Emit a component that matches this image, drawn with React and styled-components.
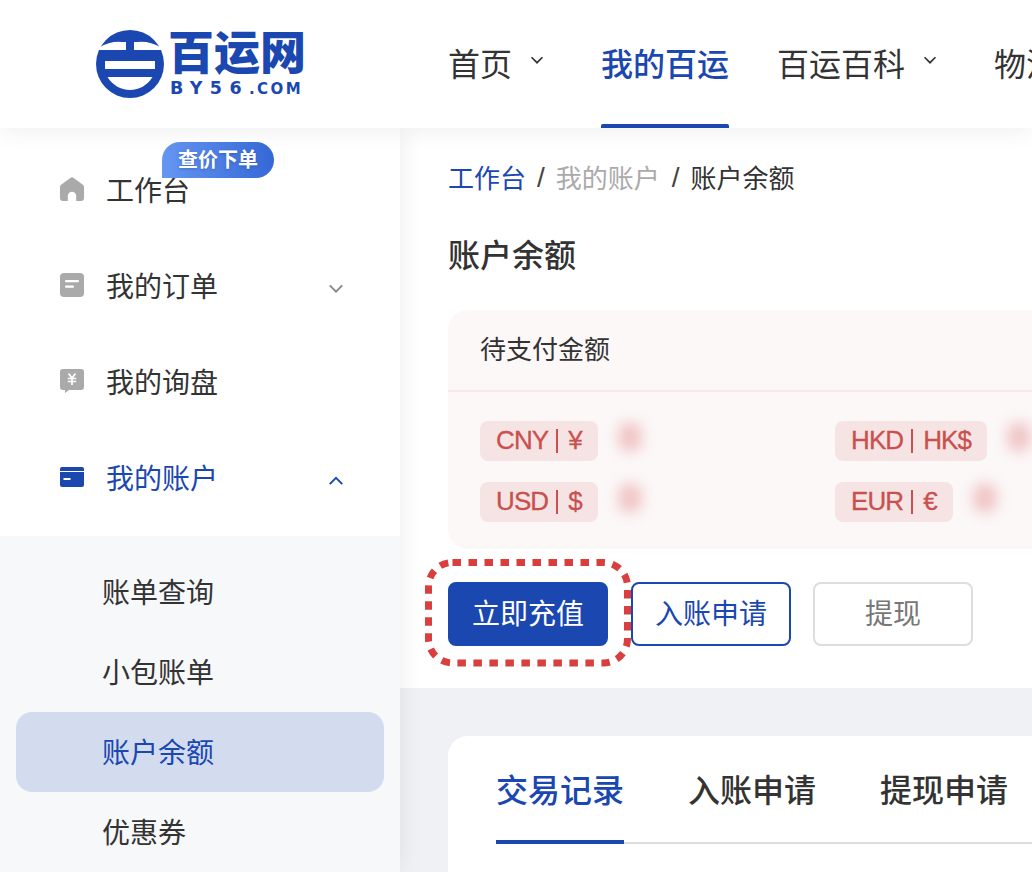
import React from 'react';
import styled, { createGlobalStyle } from 'styled-components';

const blue = '#1a47b0';

const GlobalStyle = createGlobalStyle`
  html, body {
    margin: 0;
    padding: 0;
    background: #fff;
  }
  body {
    font-family: "Liberation Sans", "Noto Sans CJK SC", sans-serif;
    color: #333;
  }
`;

const Page = styled.div`
  width: 1032px;
  height: 872px;
  overflow: hidden;
  display: flex;
  flex-direction: column;
`;

const Header = styled.header`
  position: relative;
  z-index: 2;
  flex: none;
  height: 128px;
  display: flex;
  background: #fff;
  box-shadow: 0 2px 24px rgba(0, 0, 0, 0.07);
`;

const LogoBox = styled.div`
  flex: none;
  width: 448px;
  padding: 30px 0 0 96px;
  box-sizing: border-box;
  display: flex;
  gap: 4px;
  color: ${blue};
`;

const LogoWords = styled.div`
  display: flex;
  flex-direction: column;
  white-space: nowrap;
`;

const LogoCn = styled.div`
  height: 48px;
  font-size: 46px;
  line-height: 47px;
  font-weight: 900;
`;

const LogoEn = styled.div`
  height: 20px;
  margin-left: 2px;
  font-family: "DejaVu Sans", sans-serif;
  font-size: 17.500px;
  line-height: 20px;
  font-weight: 700;
  letter-spacing: 7.400px;
`;

const LogoEnSmall = styled.span`
  font-size: 15px;
  letter-spacing: 2.400px;
`;

const Nav = styled.nav`
  display: flex;
  white-space: nowrap;
`;

const NavItem = styled.div`
  position: relative;
  height: 128px;
  padding-bottom: 4px;
  box-sizing: border-box;
  margin-right: 48px;
  display: flex;
  align-items: center;
  font-size: 32px;
  font-weight: ${p => (p.$active ? 500 : 400)};
  color: ${p => (p.$active ? blue : '#333')};
  ${p => p.$active && `
    &::after {
      content: "";
      position: absolute;
      left: 0;
      right: 0;
      bottom: 0;
      height: 4px;
      border-radius: 2px 2px 0 0;
      background: ${blue};
    }
  `}
`;

const NavCaret = styled.span`
  display: flex;
  width: 41px;
  height: 20px;
  padding-left: 18px;
  box-sizing: border-box;
  margin-bottom: 4px;
  align-items: center;
`;

const Body = styled.div`
  flex: 1;
  min-height: 0;
  display: flex;
`;

const Sidebar = styled.aside`
  position: relative;
  z-index: 1;
  flex: none;
  width: 400px;
  padding-top: 15px;
  box-sizing: border-box;
  background: #fff;
  box-shadow: 0 0 24px rgba(0, 0, 0, 0.08);
`;

const MenuRow = styled.div`
  position: relative;
  height: 96px;
  padding: 0 56px 0 60px;
  box-sizing: border-box;
  display: flex;
  align-items: center;
  gap: 22px;
  font-size: 28px;
  line-height: 36px;
  color: ${p => (p.$active ? blue : '#333')};
`;

const MenuIcon = styled.span`
  display: flex;
  margin-bottom: 4px;
`;

const MenuLabel = styled.span`
  margin-top: 2px;
`;

const MenuArrow = styled.span`
  display: flex;
  margin: 3px 0 0 auto;
`;

const Badge = styled.div`
  position: absolute;
  left: 162px;
  top: -1px;
  width: 112px;
  height: 36px;
  border-radius: 18px 18px 18px 0;
  background: linear-gradient(90deg, #6696f2, #3568d6);
  color: #fff;
  font-size: 20px;
  font-weight: 700;
  line-height: 37px;
  text-align: center;
  text-shadow: 0 1px 3px rgba(20, 50, 120, 0.35);
`;

const SubMenu = styled.div`
  margin-top: 9px;
  padding-top: 16px;
  height: 400px;
  background: #f7f8fa;
`;

const SubItem = styled.div`
  height: 80px;
  margin: 0 16px;
  padding: 0 0 2px 86px;
  box-sizing: border-box;
  display: flex;
  align-items: center;
  border-radius: 16px;
  font-size: 28px;
  color: ${p => (p.$active ? blue : '#333')};
  background: ${p => (p.$active ? '#d3dcef' : 'transparent')};
`;

const Main = styled.main`
  flex: 1;
  min-width: 0;
  background: #f0f1f5;
`;

const TopPanel = styled.section`
  width: 632px;
  padding: 32px 0 42px 48px;
  box-sizing: border-box;
  background: #fff;
`;

const Crumbs = styled.div`
  height: 36px;
  padding-bottom: 4px;
  box-sizing: border-box;
  display: flex;
  align-items: center;
  font-size: 26px;
  white-space: nowrap;
`;

const Crumb = styled.span`
  color: ${p => p.$color || '#333'};
`;

const CrumbSep = styled.span`
  margin: 4px ${p => p.$right}px 0 ${p => p.$left}px;
  font-size: 28px;
  color: #444;
`;

const Title = styled.h1`
  height: 44px;
  margin: 38px 0 32px;
  font-size: 32px;
  line-height: 44px;
  font-weight: 500;
  color: #333;
`;

const PayCard = styled.div`
  width: 900px;
  height: 239px;
  border-radius: 20px 0 0 20px;
  background: #fcf8f8;
`;

const PayHead = styled.div`
  height: 74px;
  padding: 0 0 6px 32px;
  display: flex;
  align-items: center;
  font-size: 26px;
  border-bottom: 2px solid #f8e9e9;
`;

const CurrencyGrid = styled.div`
  padding: 29px 0 0 32px;
  display: grid;
  grid-template-columns: 355px 355px;
  row-gap: 21px;
`;

const Currency = styled.div`
  display: flex;
  align-items: center;
`;

const Tag = styled.span`
  height: 40px;
  padding: 0 16px 2px;
  box-sizing: border-box;
  display: flex;
  align-items: center;
  border-radius: 8px;
  background: #f6e4e4;
  color: #c9504e;
  font-size: 26px;
  letter-spacing: -0.9px;
  white-space: nowrap;
  -webkit-text-stroke: 0.3px #c9504e;
`;

const TagBar = styled.i`
  width: 2px;
  height: 24px;
  margin: 2px 10px 0 8px;
  background: #c9504e;
`;

const Blurred = styled.span`
  width: 24px;
  height: 30px;
  margin-left: 20px;
  margin-bottom: 8px;
  border-radius: 12px;
  background: #f0c4c4;
  filter: blur(7px);
`;

const Actions = styled.div`
  margin-top: 33px;
  display: flex;
`;

const Button = styled.button`
  position: relative;
  flex: none;
  width: 160px;
  height: 64px;
  margin-left: ${p => p.$gap || 0}px;
  padding: 0 0 4px;
  box-sizing: border-box;
  border-radius: 8px;
  border: 2px solid ${p => (p.$kind === 'ghost' ? '#ddd' : blue)};
  background: ${p => (p.$kind === 'primary' ? blue : '#fff')};
  color: ${p => (p.$kind === 'primary' ? '#fff' : p.$kind === 'ghost' ? '#777' : blue)};
  font: inherit;
  font-size: 28px;
`;

const Dotted = styled.svg`
  position: absolute;
  left: -30px;
  top: -30px;
  pointer-events: none;
`;

const Records = styled.section`
  width: 900px;
  height: 300px;
  margin: 48px 0 0 48px;
  border-radius: 20px 0 0 0;
  background: #fff;
`;

const Tabs = styled.div`
  height: 108px;
  margin-left: 48px;
  display: flex;
  gap: 64px;
  box-sizing: border-box;
  border-bottom: 2px solid #ddd;
`;

const Tab = styled.div`
  position: relative;
  height: 106px;
  line-height: 110px;
  font-size: 32px;
  font-weight: 500;
  color: ${p => (p.$active ? blue : '#333')};
  ${p => p.$active && `
    &::after {
      content: "";
      position: absolute;
      left: 0;
      right: 0;
      bottom: -2px;
      height: 4px;
      background: ${blue};
    }
  `}
`;

const Chevron = ({ up, size = 16, color = '#888' }) => (
  <svg width={size} height={size * 0.6} viewBox="0 0 16 10" fill="none">
    <path d={up ? 'M1.500 8.500 8 2l6.500 6.500' : 'M1.500 1.500 8 8l6.500-6.500'} stroke={color} strokeWidth="2" />
  </svg>
);

const LogoMark = () => (
  <svg width="68" height="68" viewBox="0 0 68 68">
    <circle cx="34" cy="34" r="34" fill={blue} />
    <path d="M0 20H30V12H26Q14 11 3 17.500Z M68 20H38V12H42Q54 11 65 17.500Z" fill="#fff" />
    <rect x="9" y="31" width="50" height="8" fill="#fff" />
    <path d="M11.500 47H56.500A26 26 0 0 1 11.500 47Z" fill="#fff" />
  </svg>
);

const HomeIcon = () => (
  <svg width="24" height="24" viewBox="0 0 24 24">
    <path
      d="M10.600.7a2.400 2.400 0 0 1 2.800 0l9.500 7.100a2.600 2.600 0 0 1 1.100 2.100V21a3 3 0 0 1-3 3h-4.800v-5a4.200 4.200 0 0 0-8.400 0v5H3a3 3 0 0 1-3-3V9.900a2.600 2.600 0 0 1 1.100-2.100Z"
      fill="#aaa"
    />
  </svg>
);

const OrderIcon = () => (
  <svg width="24" height="24" viewBox="0 0 24 24">
    <rect width="24" height="24" rx="4" fill="#aaa" />
    <rect x="5" y="7" width="14" height="2.200" rx="1" fill="#fff" />
    <rect x="5" y="12.500" width="9" height="2.200" rx="1" fill="#fff" />
  </svg>
);

const InquiryIcon = () => (
  <svg width="24" height="24" viewBox="0 0 24 24">
    <path d="M3 0h18a3 3 0 0 1 3 3v15a3 3 0 0 1-3 3H9l-4 3v-3H3a3 3 0 0 1-3-3V3a3 3 0 0 1 3-3Z" fill="#aaa" />
    <path d="M8.500 4.500 12 9l3.500-4.500M7.800 9.500h8.400M7.800 12.500h8.400M12 9v7" stroke="#fff" strokeWidth="1.700" fill="none" />
  </svg>
);

const AccountIcon = () => (
  <svg width="24" height="20" viewBox="0 0 24 20">
    <path d="M2 0h20a2 2 0 0 1 2 2v2H0V2a2 2 0 0 1 2-2Z" fill={blue} />
    <path d="M0 5h24v13a2 2 0 0 1-2 2H2a2 2 0 0 1-2-2Z" fill={blue} />
    <rect x="3.500" y="11" width="7" height="2" fill="#fff" />
  </svg>
);

const currencies = [
  { code: 'CNY', sign: '¥' },
  { code: 'HKD', sign: 'HK$' },
  { code: 'USD', sign: '$' },
  { code: 'EUR', sign: '€' },
];

const subItems = ['账单查询', '小包账单', '账户余额', '优惠券'];

export default function App() {
  return (
    <Page>
      <GlobalStyle />
      <Header>
        <LogoBox>
          <LogoMark />
          <LogoWords>
            <LogoCn>百运网</LogoCn>
            <LogoEn>BY56<LogoEnSmall>.COM</LogoEnSmall></LogoEn>
          </LogoWords>
        </LogoBox>
        <Nav>
          <NavItem>首页<NavCaret><Chevron size={14} color="#333" /></NavCaret></NavItem>
          <NavItem $active>我的百运</NavItem>
          <NavItem>百运百科<NavCaret><Chevron size={14} color="#333" /></NavCaret></NavItem>
          <NavItem>物流</NavItem>
        </Nav>
      </Header>
      <Body>
        <Sidebar>
          <MenuRow>
            <Badge>查价下单</Badge>
            <MenuIcon><HomeIcon /></MenuIcon><MenuLabel>工作台</MenuLabel>
          </MenuRow>
          <MenuRow>
            <MenuIcon><OrderIcon /></MenuIcon><MenuLabel>我的订单</MenuLabel>
            <MenuArrow><Chevron /></MenuArrow>
          </MenuRow>
          <MenuRow>
            <MenuIcon><InquiryIcon /></MenuIcon><MenuLabel>我的询盘</MenuLabel>
          </MenuRow>
          <MenuRow $active>
            <MenuIcon><AccountIcon /></MenuIcon><MenuLabel>我的账户</MenuLabel>
            <MenuArrow><Chevron up color={blue} /></MenuArrow>
          </MenuRow>
          <SubMenu>
            {subItems.map(item => (
              <SubItem key={item} $active={item === '账户余额'}>{item}</SubItem>
            ))}
          </SubMenu>
        </Sidebar>
        <Main>
          <TopPanel>
            <Crumbs>
              <Crumb $color={blue}>工作台</Crumb>
              <CrumbSep $left={11} $right={11}>/</CrumbSep>
              <Crumb $color="#aaa">我的账户</Crumb>
              <CrumbSep $left={12} $right={11}>/</CrumbSep>
              <Crumb>账户余额</Crumb>
            </Crumbs>
            <Title>账户余额</Title>
            <PayCard>
              <PayHead>待支付金额</PayHead>
              <CurrencyGrid>
                {currencies.map(c => (
                  <Currency key={c.code}>
                    <Tag>{c.code}<TagBar />{c.sign}</Tag>
                    <Blurred />
                  </Currency>
                ))}
              </CurrencyGrid>
            </PayCard>
            <Actions>
              <Button $kind="primary">
                立即充值
                <Dotted width="212" height="116" viewBox="0 0 212 116" fill="none">
                  <rect x="8.500" y="8.500" width="199" height="100.500" rx="24" stroke="#d93f3f" strokeWidth="7" strokeDasharray="8.500 7.500" />
                </Dotted>
              </Button>
              <Button $gap={23}>入账申请</Button>
              <Button $gap={22} $kind="ghost">提现</Button>
            </Actions>
          </TopPanel>
          <Records>
            <Tabs>
              <Tab $active>交易记录</Tab>
              <Tab>入账申请</Tab>
              <Tab>提现申请</Tab>
            </Tabs>
          </Records>
        </Main>
      </Body>
    </Page>
  );
}
